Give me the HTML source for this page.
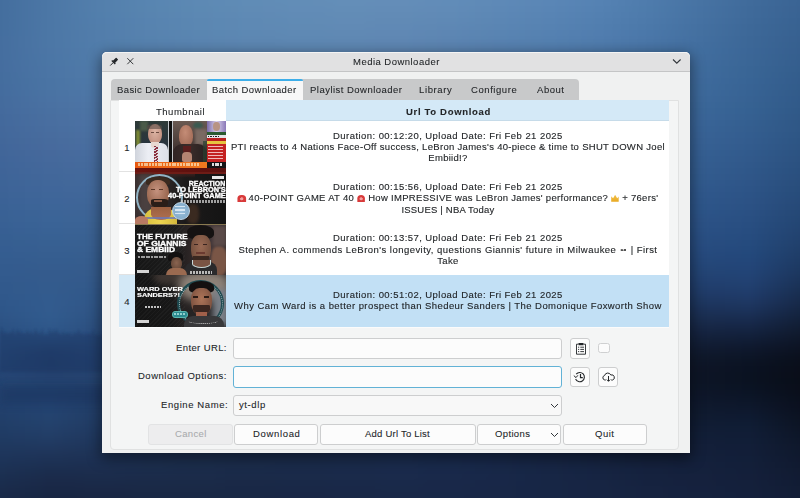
<!DOCTYPE html>
<html><head><meta charset="utf-8">
<style>
*{margin:0;padding:0;box-sizing:border-box}
html,body{width:800px;height:498px;overflow:hidden}
body{position:relative;font-family:"Liberation Sans",sans-serif;font-size:10.2px;color:#232629;
background:#2a4672}
.a{position:absolute}
#bgs{left:0;top:0;width:800px;height:498px;filter:blur(3px)}
#bgs i{position:absolute;left:-15px;width:830px;height:6px;display:block}
#win{left:102px;top:52px;width:588px;height:400.7px;background:#f0f1f1;border-radius:5px 5px 0 0;
 box-shadow:0 4px 14px 2px rgba(0,0,0,.42)}
#title{left:0;top:0;width:588px;height:20px;background:#e1e1e2;border-radius:5px 5px 0 0;border-bottom:1px solid #c4c5c6;box-shadow:inset 0 1px 0 #f4f4f4}
#title .t{left:0;width:588px;top:4px;text-align:center;font-size:10.6px;color:#31363b}
#tabbar{left:9px;top:27px;width:468px;height:21px;background:#c8c9ca;border-radius:4px 4px 0 0}
#tabact{left:105px;top:27px;width:96px;height:22px;background:#f7f7f7;border-top:2px solid #3daee9;border-radius:2px 2px 0 0}
.tab{top:33px;font-size:10.2px;color:#31363b;white-space:nowrap}
#page{left:8.2px;top:48px;width:569.3px;height:349.5px;background:#f4f5f5;border:1px solid #e0e1e1;border-radius:0 0 4px 4px}
#table{left:17px;top:48px;width:550px;height:21px;background:#fff}
#hdr{left:123.5px;top:48px;width:443.5px;height:21px;background:#d4e9f7;border-bottom:1px solid #c6dbe9}
.th{font-weight:bold}
.row{left:33px;width:534px;height:51.4px;background:#fff}
.vh{left:17px;width:16px;height:51.4px;background:#fff;border-bottom:1px solid #e2e2e2;text-align:center;line-height:51px;font-size:0}
.vn{left:17px;width:16px;text-align:center;font-size:8.8px;line-height:8.8px;transform:scaleX(1.08);-webkit-text-stroke:0.1px #232629}
.ln{left:123px;width:444px;text-align:center;line-height:11px;font-size:8.8px;white-space:pre;transform:scaleX(1.08);transform-origin:222.3px 0;color:#1e2124;-webkit-text-stroke:0.12px #1e2124}
.sel{background:#c2e0f5}
.thumb{left:33px;width:91px;height:51.4px;overflow:hidden;background:#222}
.thumb>*{filter:blur(0.3px)}
.lbl{text-align:right;width:120px;left:4px;white-space:nowrap}
.inp{left:131px;width:329px;height:21px;background:#fcfcfc;border:1px solid #cdcecf;border-radius:3px}
.btn{height:21px;background:#fcfcfc;border:1px solid #cdcecf;border-radius:3px;text-align:center;line-height:19px;white-space:nowrap}
.em{display:inline-block;width:7.5px;height:7px;vertical-align:-0.5px;position:relative}
.em.r{background:radial-gradient(circle at 50% 55%,#f4a0a0 0 1.2px,#d83a3a 1.8px);border-radius:3.5px 3.5px 0.5px 0.5px}
.em.y{background:linear-gradient(#f2c14a,#e8a820);clip-path:polygon(0 20%,25% 50%,50% 0,75% 50%,100% 20%,100% 100%,0 100%)}
.em.e{background:radial-gradient(circle at 30% 60%,#555 0 1px,transparent 1.3px),radial-gradient(circle at 70% 60%,#555 0 1px,transparent 1.3px)}

.thumb i{position:absolute;display:block}
.thumb b{position:absolute;display:block;color:#fff;font-weight:bold;line-height:1;white-space:pre;transform-origin:0 0;font-family:"Liberation Sans",sans-serif}
.ui{font-size:8.8px;line-height:8.8px;white-space:pre;transform:scaleX(1.08);transform-origin:0 0;-webkit-text-stroke:0.08px currentColor}
</style></head><body>
<div id="bgs" class="a">
<i style="top:-12px;background:linear-gradient(90deg,#446e9e 15px,#4c77a6 65px,#537fac 115px,#5885b1 165px,#5d8ab4 215px,#608cb6 265px,#638eb8 315px,#648eb8 365px,#648eb8 415px,#628cb8 465px,#5e8ab7 515px,#5a87b6 565px,#5582b3 615px,#4f7cac 665px,#4773a4 715px,#406b9b 765px,#3b6494 815px)"></i>
<i style="top:-6px;background:linear-gradient(90deg,#446e9e 15px,#4c77a6 65px,#537fac 115px,#5885b1 165px,#5d8ab4 215px,#608cb6 265px,#638eb8 315px,#648eb8 365px,#648eb8 415px,#628cb8 465px,#5e8ab7 515px,#5a87b6 565px,#5582b3 615px,#4f7cac 665px,#4773a4 715px,#406b9b 765px,#3b6494 815px)"></i>
<i style="top:0px;background:linear-gradient(90deg,#446e9e 15px,#4c77a6 65px,#537fac 115px,#5885b1 165px,#5d89b4 215px,#608cb6 265px,#628db7 315px,#648eb8 365px,#648db8 415px,#618cb8 465px,#5e89b7 515px,#5a86b6 565px,#5582b3 615px,#4e7bac 665px,#4773a3 715px,#406b9b 765px,#3a6494 815px)"></i>
<i style="top:6px;background:linear-gradient(90deg,#446e9e 15px,#4c77a6 65px,#537fac 115px,#5885b0 165px,#5c89b3 215px,#608bb5 265px,#628cb7 315px,#638db7 365px,#638cb7 415px,#618bb7 465px,#5d88b6 515px,#5985b5 565px,#5481b2 615px,#4d7bab 665px,#4672a3 715px,#3f6a9a 765px,#3a6393 815px)"></i>
<i style="top:12px;background:linear-gradient(90deg,#446e9e 15px,#4c77a6 65px,#527fac 115px,#5884b0 165px,#5c88b3 215px,#5f8ab5 265px,#618bb6 315px,#628cb6 365px,#628bb6 415px,#608ab6 465px,#5c87b5 515px,#5884b4 565px,#5380b1 615px,#4d7aab 665px,#4672a2 715px,#3f6a9a 765px,#396393 815px)"></i>
<i style="top:18px;background:linear-gradient(90deg,#446e9e 15px,#4c77a6 65px,#527eac 115px,#5783b0 165px,#5b87b2 215px,#5e89b4 265px,#608bb5 315px,#628bb6 365px,#618ab5 415px,#5f89b5 465px,#5b86b4 515px,#5783b3 565px,#527fb0 615px,#4c79aa 665px,#4571a2 715px,#3e6999 765px,#386292 815px)"></i>
<i style="top:24px;background:linear-gradient(90deg,#446e9e 15px,#4c77a6 65px,#527eab 115px,#5783af 165px,#5b87b2 215px,#5e89b4 265px,#608ab4 315px,#618ab5 365px,#6089b5 415px,#5e87b4 465px,#5a85b3 515px,#5682b2 565px,#517eaf 615px,#4b78a9 665px,#4470a1 715px,#3d6898 765px,#386291 815px)"></i>
<i style="top:30px;background:linear-gradient(90deg,#446e9f 15px,#4c77a6 65px,#527dab 115px,#5782af 165px,#5a86b1 215px,#5d88b3 265px,#5f89b4 315px,#6089b4 365px,#6088b4 415px,#5d86b3 465px,#5984b2 515px,#5581b1 565px,#517daf 615px,#4a77a9 665px,#4470a0 715px,#3d6898 765px,#376191 815px)"></i>
<i style="top:36px;background:linear-gradient(90deg,#456e9f 15px,#4c77a6 65px,#527dab 115px,#5682ae 165px,#5a85b1 215px,#5d87b2 265px,#5e88b3 315px,#5f88b3 365px,#5f87b3 415px,#5c85b2 465px,#5883b1 515px,#5480b0 565px,#507cae 615px,#4a76a8 665px,#436fa0 715px,#3c6797 765px,#376090 815px)"></i>
<i style="top:42px;background:linear-gradient(90deg,#456e9f 15px,#4c77a6 65px,#517dab 115px,#5681ae 165px,#5984b0 215px,#5c86b1 265px,#5d87b2 315px,#5e87b2 365px,#5e86b2 415px,#5b84b1 465px,#5781b0 515px,#537faf 565px,#4f7bac 615px,#4975a7 665px,#426e9f 715px,#3c6797 765px,#36608f 815px)"></i>
<i style="top:48px;background:linear-gradient(90deg,#456e9f 15px,#4c76a6 65px,#517caa 115px,#5580ad 165px,#5983af 215px,#5b85b1 265px,#5d86b1 315px,#5d86b2 365px,#5d85b1 415px,#5a83b0 465px,#5680af 515px,#527dae 565px,#4e7aab 615px,#4875a6 665px,#416e9f 715px,#3b6697 765px,#365f8f 815px)"></i>
<i style="top:54px;background:linear-gradient(90deg,#456e9f 15px,#4b76a6 65px,#517caa 115px,#557fad 165px,#5882af 215px,#5a84b0 265px,#5c85b1 315px,#5c85b1 365px,#5b84b0 415px,#5982af 465px,#557fae 515px,#517cad 565px,#4d79aa 615px,#4774a5 665px,#416d9e 715px,#3b6696 765px,#355f8e 815px)"></i>
<i style="top:60px;background:linear-gradient(90deg,#456d9f 15px,#4b76a5 65px,#507ba9 115px,#547fac 165px,#5781ae 215px,#5a83af 265px,#5b83b0 315px,#5b83b0 365px,#5a82af 415px,#5880ae 465px,#547dad 515px,#507bac 565px,#4c77a9 615px,#4673a4 665px,#406c9e 715px,#3a6696 765px,#355e8e 815px)"></i>
<i style="top:66px;background:linear-gradient(90deg,#456d9f 15px,#4b75a5 65px,#507aa9 115px,#547eab 165px,#5780ad 215px,#5982ae 265px,#5a82af 315px,#5a82af 365px,#5981ae 415px,#577fad 465px,#537cac 515px,#4f79aa 565px,#4b76a8 615px,#4572a4 665px,#3f6c9d 715px,#396595 765px,#345e8d 815px)"></i>
<i style="top:72px;background:linear-gradient(90deg,#446d9e 15px,#4b75a5 65px,#507aa8 115px,#537dab 165px,#567fac 215px,#5881ae 265px,#5981ae 315px,#5981ae 365px,#5880ae 415px,#557eac 465px,#527bab 515px,#4e78a9 565px,#4a75a7 615px,#4471a3 665px,#3f6b9d 715px,#396595 765px,#335d8c 815px)"></i>
<i style="top:78px;background:linear-gradient(90deg,#446d9e 15px,#4a74a4 65px,#4f79a8 115px,#537caa 165px,#557eac 215px,#577fad 265px,#5880ad 315px,#5880ad 365px,#577fad 415px,#547cab 465px,#5179aa 515px,#4d76a8 565px,#4974a6 615px,#4470a2 665px,#3e6a9c 715px,#386495 765px,#335c8c 815px)"></i>
<i style="top:84px;background:linear-gradient(90deg,#446c9e 15px,#4a74a4 65px,#4f78a7 115px,#527ba9 165px,#557dab 215px,#567eac 265px,#577fac 315px,#577eac 365px,#567dac 415px,#537baa 465px,#5078a8 515px,#4c75a6 565px,#4772a4 615px,#436fa1 665px,#3d6a9b 715px,#386394 765px,#325c8b 815px)"></i>
<i style="top:90px;background:linear-gradient(90deg,#446c9e 15px,#4a73a3 65px,#4e77a7 115px,#527aa9 165px,#547caa 215px,#557dab 265px,#567dab 315px,#567dab 365px,#557cab 415px,#527aa9 465px,#4e76a7 515px,#4a74a5 565px,#4671a3 615px,#426da0 665px,#3d699b 715px,#376394 765px,#325b8a 815px)"></i>
<i style="top:96px;background:linear-gradient(90deg,#446b9d 15px,#4a72a3 65px,#4e76a6 115px,#5179a8 165px,#537ba9 215px,#547caa 265px,#557caa 315px,#557caa 365px,#537ba9 415px,#5178a8 465px,#4d75a6 515px,#4972a4 565px,#456fa2 615px,#416c9f 665px,#3c689a 715px,#376293 765px,#315a8a 815px)"></i>
<i style="top:102px;background:linear-gradient(90deg,#446b9d 15px,#4a71a2 65px,#4e75a5 115px,#5078a7 165px,#527aa8 215px,#537ba9 265px,#547ba9 315px,#547ba9 365px,#5279a8 415px,#4f77a7 465px,#4c73a4 515px,#4870a2 565px,#446ea1 615px,#406b9e 665px,#3b6799 715px,#366292 765px,#315a89 815px)"></i>
<i style="top:108px;background:linear-gradient(90deg,#446a9d 15px,#4970a1 65px,#4d74a4 115px,#4f77a6 165px,#5179a7 215px,#5279a8 265px,#537aa8 315px,#5279a8 365px,#5178a7 415px,#4e75a5 465px,#4b72a3 515px,#476fa1 565px,#436d9f 615px,#3f6a9d 665px,#3a6698 715px,#356192 765px,#305988 815px)"></i>
<i style="top:114px;background:linear-gradient(90deg,#43699c 15px,#496fa0 65px,#4d73a4 115px,#4f76a5 165px,#5077a6 215px,#5178a7 265px,#5278a7 315px,#5178a7 365px,#4f76a6 415px,#4d74a4 465px,#4970a2 515px,#456d9f 565px,#426b9e 615px,#3e699c 665px,#3a6598 715px,#356091 765px,#305887 815px)"></i>
<i style="top:120px;background:linear-gradient(90deg,#43699c 15px,#496ea0 65px,#4c72a3 115px,#4e75a4 165px,#4f76a5 215px,#5077a6 265px,#5177a6 315px,#5076a6 365px,#4e75a5 415px,#4b72a3 465px,#486fa0 515px,#446c9e 565px,#416a9c 615px,#3d689b 665px,#396497 715px,#345f90 765px,#2f5786 815px)"></i>
<i style="top:126px;background:linear-gradient(90deg,#43689b 15px,#486d9f 65px,#4b71a2 115px,#4d74a4 165px,#4f75a4 215px,#4f75a5 265px,#4f75a5 315px,#4f75a5 365px,#4d74a4 415px,#4a71a2 465px,#476d9f 515px,#436a9c 565px,#40689b 615px,#3c669a 665px,#386396 715px,#345e8f 765px,#2f5786 815px)"></i>
<i style="top:132px;background:linear-gradient(90deg,#42689b 15px,#486c9e 65px,#4b70a1 115px,#4c73a3 165px,#4e74a3 215px,#4e74a4 265px,#4e74a4 315px,#4d74a4 365px,#4c72a3 415px,#496fa0 465px,#456c9d 515px,#42699b 565px,#3f679a 615px,#3b6598 665px,#386295 715px,#335d8f 765px,#2e5685 815px)"></i>
<i style="top:138px;background:linear-gradient(90deg,#42679a 15px,#476b9d 65px,#4a6fa0 115px,#4b71a2 165px,#4d72a2 215px,#4d73a2 265px,#4d73a3 315px,#4c72a3 365px,#4a71a2 415px,#476e9f 465px,#446a9c 515px,#406799 565px,#3d6598 615px,#3a6497 665px,#376194 715px,#335c8e 765px,#2d5584 815px)"></i>
<i style="top:144px;background:linear-gradient(90deg,#41669a 15px,#476a9d 65px,#496ea0 115px,#4b70a1 165px,#4c71a1 215px,#4c71a1 265px,#4c71a1 315px,#4b71a1 365px,#496fa0 415px,#466c9e 465px,#43699a 515px,#3f6597 565px,#3c6497 615px,#396396 665px,#366093 715px,#325b8d 765px,#2d5483 815px)"></i>
<i style="top:150px;background:linear-gradient(90deg,#416699 15px,#46699c 65px,#486d9f 115px,#4a6fa0 165px,#4a70a0 215px,#4b70a0 265px,#4b70a0 315px,#4a6fa0 365px,#486e9f 415px,#456b9c 465px,#416799 515px,#3e6496 565px,#3b6295 615px,#386195 665px,#355f92 715px,#315a8c 765px,#2c5382 815px)"></i>
<i style="top:156px;background:linear-gradient(90deg,#406599 15px,#45699c 65px,#476c9e 115px,#496e9f 165px,#496e9f 215px,#4a6e9f 265px,#496e9f 315px,#486e9f 365px,#466c9e 415px,#43699b 465px,#406597 515px,#3d6294 565px,#3a6193 615px,#376093 665px,#345e91 715px,#31598b 765px,#2c5281 815px)"></i>
<i style="top:162px;background:linear-gradient(90deg,#3f6599 15px,#44689b 65px,#466b9d 115px,#486d9e 165px,#486d9d 215px,#496d9d 265px,#486d9d 315px,#476c9e 365px,#456b9d 415px,#42689a 465px,#3f6496 515px,#3b6192 565px,#395f92 615px,#365f92 665px,#345d90 715px,#30588a 765px,#2b5180 815px)"></i>
<i style="top:168px;background:linear-gradient(90deg,#3f6498 15px,#43689b 65px,#456a9c 115px,#476c9d 165px,#476c9c 215px,#476c9c 265px,#476b9c 315px,#466b9c 365px,#44699b 415px,#416698 465px,#3d6294 515px,#3a5f91 565px,#385e90 615px,#355d91 665px,#335c8f 715px,#2f5789 765px,#2a507f 815px)"></i>
<i style="top:174px;background:linear-gradient(90deg,#3e6498 15px,#42679a 65px,#446a9c 115px,#466b9c 165px,#466a9b 215px,#466a9a 265px,#456a9b 315px,#44699b 365px,#42689a 415px,#3f6597 465px,#3c6192 515px,#395d8f 565px,#365c8e 615px,#345c8f 665px,#325b8e 715px,#2f5688 765px,#2a4f7e 815px)"></i>
<i style="top:180px;background:linear-gradient(90deg,#3d6497 15px,#41679a 65px,#43699b 115px,#44699a 165px,#45699a 215px,#456999 265px,#446899 315px,#43689a 365px,#416699 415px,#3e6395 465px,#3b5f91 515px,#385c8d 565px,#355b8d 615px,#335b8e 665px,#315a8d 715px,#2e5588 765px,#294e7c 815px)"></i>
<i style="top:186px;background:linear-gradient(90deg,#3d6397 15px,#40669a 65px,#42689a 115px,#436899 165px,#446898 215px,#446797 265px,#436798 315px,#426698 365px,#406597 415px,#3d6294 465px,#3a5d8f 515px,#365a8b 565px,#34598b 615px,#32598c 665px,#30588c 715px,#2d5487 765px,#284d7b 815px)"></i>
<i style="top:192px;background:linear-gradient(90deg,#3c6396 15px,#3f6699 65px,#416799 115px,#426798 165px,#436697 215px,#426696 265px,#426596 315px,#406597 365px,#3e6396 415px,#3b6092 465px,#385c8d 515px,#35598a 565px,#335789 615px,#31588b 665px,#2f578b 715px,#2c5386 765px,#274c7a 815px)"></i>
<i style="top:198px;background:linear-gradient(90deg,#3b6296 15px,#3e6599 65px,#406698 115px,#416697 165px,#416595 215px,#416494 265px,#406495 315px,#3f6395 365px,#3d6295 415px,#3a5f91 465px,#375a8c 515px,#345788 565px,#325687 615px,#305689 665px,#2e568a 715px,#2c5285 765px,#274a79 815px)"></i>
<i style="top:204px;background:linear-gradient(90deg,#3a6295 15px,#3d6598 65px,#3f6597 115px,#406596 165px,#406494 215px,#406393 265px,#3f6293 315px,#3e6294 365px,#3c6093 415px,#395d8f 465px,#36598a 515px,#335586 565px,#315485 615px,#2f5587 665px,#2d5589 715px,#2b5184 765px,#264977 815px)"></i>
<i style="top:210px;background:linear-gradient(90deg,#396195 15px,#3c6497 65px,#3e6496 115px,#3f6495 165px,#3f6292 215px,#3e6191 265px,#3e6191 315px,#3c6092 365px,#3a5f92 415px,#385b8d 465px,#345788 515px,#325384 565px,#2f5283 615px,#2e5385 665px,#2c5488 715px,#2a5083 765px,#254876 815px)"></i>
<i style="top:216px;background:linear-gradient(90deg,#396194 15px,#3b6497 65px,#3d6495 115px,#3e6293 165px,#3e6191 215px,#3d5f8f 265px,#3c5f90 315px,#3b5f91 365px,#395d90 415px,#365a8c 465px,#335586 515px,#305282 565px,#2e5081 615px,#2d5183 665px,#2c5286 715px,#294f82 765px,#244774 815px)"></i>
<i style="top:222px;background:linear-gradient(90deg,#386094 15px,#3a6396 65px,#3c6394 115px,#3d6192 165px,#3c5f8f 215px,#3c5e8e 265px,#3b5d8e 315px,#3a5d8f 365px,#385c8f 415px,#35588a 465px,#325484 515px,#2f5080 565px,#2d4f7f 615px,#2c5081 665px,#2b5185 715px,#284e81 765px,#234573 815px)"></i>
<i style="top:228px;background:linear-gradient(90deg,#375f93 15px,#396295 65px,#3b6293 115px,#3c6091 165px,#3b5e8e 215px,#3a5c8c 265px,#3a5c8c 315px,#385c8d 365px,#365a8d 415px,#345788 465px,#315282 515px,#2e4e7d 565px,#2c4d7c 615px,#2b4e7f 665px,#2a5084 715px,#274d80 765px,#234471 815px)"></i>
<i style="top:234px;background:linear-gradient(90deg,#365f92 15px,#386193 65px,#3a6192 115px,#3b5f8f 165px,#3a5c8c 215px,#395b8a 265px,#385a8a 315px,#375a8c 365px,#35598b 415px,#325586 465px,#2f5080 515px,#2d4d7b 565px,#2b4b7a 615px,#2a4c7d 665px,#294e82 715px,#264c7f 765px,#22426f 815px)"></i>
<i style="top:240px;background:linear-gradient(90deg,#365e91 15px,#376092 65px,#396091 115px,#395e8e 165px,#395b8a 215px,#385988 265px,#375888 315px,#36588a 365px,#34578a 415px,#315385 465px,#2e4f7e 515px,#2b4b79 565px,#2a4977 615px,#294a7a 665px,#284d80 715px,#254b7e 765px,#21416d 815px)"></i>
<i style="top:246px;background:linear-gradient(90deg,#355d91 15px,#375f91 65px,#385f90 115px,#385c8d 165px,#385989 215px,#375786 265px,#365787 315px,#355788 365px,#335688 415px,#305283 465px,#2d4d7c 515px,#2a4977 565px,#284775 615px,#274878 665px,#274b7f 715px,#244a7d 765px,#203f6a 815px)"></i>
<i style="top:252px;background:linear-gradient(90deg,#345d90 15px,#365e90 65px,#375e8f 115px,#375b8b 165px,#365887 215px,#355684 265px,#345585 315px,#335586 365px,#315486 415px,#2f5081 465px,#2c4b7a 515px,#294774 565px,#274572 615px,#264675 665px,#26497c 715px,#23487b 765px,#1f3d68 815px)"></i>
<i style="top:258px;background:linear-gradient(90deg,#345c8f 15px,#355d8f 65px,#365d8e 115px,#365a8a 165px,#355685 215px,#345483 265px,#335383 315px,#325384 365px,#305284 415px,#2e4f7f 465px,#2b4a78 515px,#284572 565px,#26436f 615px,#254472 665px,#25487a 715px,#23477a 765px,#1e3b65 815px)"></i>
<i style="top:264px;background:linear-gradient(90deg,#335b8e 15px,#355c8e 65px,#365c8d 115px,#355888 165px,#345583 215px,#335281 265px,#325281 315px,#315282 365px,#2f5182 415px,#2d4d7d 465px,#294876 515px,#27446f 565px,#25416d 615px,#24426f 665px,#244677 715px,#234578 765px,#1d3962 815px)"></i>
<i style="top:270px;background:linear-gradient(90deg,#335b8e 15px,#345b8d 65px,#355b8c 115px,#345787 165px,#335382 215px,#32517f 265px,#31507f 315px,#305080 365px,#2e4f80 415px,#2b4b7b 465px,#284674 515px,#26426d 565px,#243f6a 615px,#23406c 665px,#234474 715px,#224476 765px,#1c375f 815px)"></i>
<i style="top:276px;background:linear-gradient(90deg,#325a8d 15px,#345b8d 65px,#345a8b 115px,#335685 165px,#325280 215px,#304f7c 265px,#2f4e7d 315px,#2e4f7e 365px,#2d4d7e 415px,#2a4a79 465px,#274571 515px,#24406b 565px,#223d67 615px,#223d68 665px,#224171 715px,#224273 765px,#1b345b 815px)"></i>
<i style="top:282px;background:linear-gradient(90deg,#31598c 15px,#335b8d 65px,#33598a 115px,#325484 165px,#30507e 215px,#2f4d7a 265px,#2e4d7a 315px,#2d4d7c 365px,#2c4c7c 415px,#294877 465px,#26436f 515px,#233e68 565px,#213b64 615px,#213b64 665px,#213f6d 715px,#214070 765px,#1a3257 815px)"></i>
<i style="top:288px;background:linear-gradient(90deg,#31598c 15px,#335b8d 65px,#325889 115px,#315382 165px,#2f4f7c 215px,#2e4c78 265px,#2d4b78 315px,#2c4b7a 365px,#2b4a79 415px,#284775 465px,#25416d 515px,#223c66 565px,#203961 615px,#1f3860 665px,#203c69 715px,#203d6c 765px,#192f52 815px)"></i>
<i style="top:294px;background:linear-gradient(90deg,#30588b 15px,#325b8e 65px,#315788 115px,#305280 165px,#2e4d7a 215px,#2d4a76 265px,#2c4976 315px,#2b4a78 365px,#2a4977 415px,#274573 465px,#24406b 515px,#213b63 565px,#1f375e 615px,#1e365d 665px,#1f3964 715px,#1f3a68 765px,#182c4e 815px)"></i>
<i style="top:300px;background:linear-gradient(90deg,#2f578a 15px,#325b8e 65px,#315687 115px,#2f507f 165px,#2d4c78 215px,#2b4874 265px,#2b4874 315px,#2a4876 365px,#294775 415px,#264370 465px,#233e69 515px,#203961 565px,#1e355b 615px,#1d3358 665px,#1d365e 715px,#1e3762 765px,#172949 815px)"></i>
<i style="top:306px;background:linear-gradient(90deg,#2e5689 15px,#325b8e 65px,#305485 115px,#2e4f7d 165px,#2c4a76 215px,#2a4772 265px,#2a4672 315px,#294774 365px,#284573 415px,#25426e 465px,#223d67 515px,#1f375f 565px,#1d3358 615px,#1c3154 665px,#1c3259 715px,#1c335c 765px,#152644 815px)"></i>
<i style="top:312px;background:linear-gradient(90deg,#2e5587 15px,#315b8e 65px,#2e5383 115px,#2d4d7b 165px,#2b4974 215px,#294570 265px,#294570 315px,#284572 365px,#274471 415px,#24406c 465px,#213b65 515px,#1e365c 565px,#1c3155 615px,#1a2e50 665px,#1a2f52 715px,#1a2f54 765px,#14233e 815px)"></i>
<i style="top:318px;background:linear-gradient(90deg,#2d5385 15px,#305a8d 65px,#2d5181 115px,#2c4c79 165px,#2a4772 215px,#28446e 265px,#28436e 315px,#274370 365px,#26426f 415px,#233f6b 465px,#203a63 515px,#1d345a 565px,#1b2f52 615px,#192c4c 665px,#192b4c 715px,#182a4d 765px,#122039 815px)"></i>
<i style="top:324px;background:linear-gradient(90deg,#2b5183 15px,#2f588b 65px,#2c4f7f 115px,#2b4a77 165px,#294671 215px,#27426c 265px,#27426c 315px,#26426e 365px,#25416d 415px,#233e69 465px,#203861 515px,#1c3358 565px,#1a2e50 615px,#182948 665px,#172746 715px,#162645 765px,#111d33 815px)"></i>
<i style="top:330px;background:linear-gradient(90deg,#2a5081 15px,#2d5587 65px,#2b4d7d 115px,#2a4976 165px,#28446f 215px,#26406a 265px,#26406a 315px,#25416c 365px,#24406b 415px,#223c67 465px,#1f375f 515px,#1c3156 565px,#192c4d 615px,#172745 665px,#15233f 715px,#13223e 765px,#101a2e 815px)"></i>
<i style="top:336px;background:linear-gradient(90deg,#294e7e 15px,#2a4f80 65px,#2a4b7a 115px,#294874 165px,#27436d 215px,#253f68 265px,#253f68 315px,#243f6a 365px,#233e69 415px,#213b65 465px,#1e365d 515px,#1b3054 565px,#182b4b 615px,#162541 665px,#132039 715px,#111e37 765px,#0e1729 815px)"></i>
<i style="top:342px;background:linear-gradient(90deg,#284c7c 15px,#274876 65px,#284977 115px,#284672 165px,#26416b 215px,#243e66 265px,#243d67 315px,#243e68 365px,#233d67 415px,#203a63 465px,#1d355b 515px,#1a2e52 565px,#182949 615px,#15233e 665px,#121d34 715px,#0f1a30 765px,#0d1425 815px)"></i>
<i style="top:348px;background:linear-gradient(90deg,#274a7a 15px,#24426f 65px,#274775 115px,#274570 165px,#254069 215px,#233c64 265px,#233c65 315px,#233d66 365px,#223c66 415px,#203861 465px,#1d335a 515px,#192d50 565px,#172847 615px,#14213b 665px,#101a2f 715px,#0e172b 765px,#0c1221 815px)"></i>
<i style="top:354px;background:linear-gradient(90deg,#264877 15px,#233f6c 65px,#264573 115px,#26436e 165px,#243f68 215px,#233b63 265px,#223b63 315px,#223b65 365px,#213a64 415px,#1f3760 465px,#1c3258 515px,#192c4f 565px,#162745 615px,#132038 665px,#0f182a 715px,#0c1527 765px,#0b101d 815px)"></i>
<i style="top:360px;background:linear-gradient(90deg,#254776 15px,#223f6b 65px,#254471 115px,#25426c 165px,#243e66 215px,#223a61 265px,#223a61 315px,#213a63 365px,#203962 415px,#1e365e 465px,#1c3157 515px,#182b4d 565px,#162643 615px,#131f36 665px,#0e1628 715px,#0b1323 765px,#0a0f1b 815px)"></i>
<i style="top:366px;background:linear-gradient(90deg,#244574 15px,#223f6c 65px,#24436f 115px,#25416b 165px,#233c64 215px,#213960 265px,#213960 315px,#213961 365px,#203861 415px,#1e355d 465px,#1b3055 515px,#182b4c 565px,#152542 615px,#121e35 665px,#0e1526 715px,#0a1222 765px,#0a0e1a 815px)"></i>
<i style="top:372px;background:linear-gradient(90deg,#244473 15px,#223f6c 65px,#24416d 115px,#243f69 165px,#223b63 215px,#21385e 265px,#20375e 315px,#203860 365px,#1f375f 415px,#1d345b 465px,#1b2f54 515px,#182a4b 565px,#152441 615px,#121d34 665px,#0d1526 715px,#0a1221 765px,#0a0e19 815px)"></i>
<i style="top:378px;background:linear-gradient(90deg,#234471 15px,#22406d 65px,#23416c 115px,#233e67 165px,#223a61 215px,#20375d 265px,#20365d 315px,#20375e 365px,#1f365d 415px,#1d335a 465px,#1a2f53 515px,#17294a 565px,#152340 615px,#121c33 665px,#0d1526 715px,#0a1221 765px,#090e19 815px)"></i>
<i style="top:384px;background:linear-gradient(90deg,#234370 15px,#22416e 65px,#23406b 115px,#233d66 165px,#21395f 215px,#20365b 265px,#1f355b 315px,#1f365c 365px,#1e355c 415px,#1c3258 465px,#1a2e52 515px,#172949 565px,#15233f 615px,#111c33 665px,#0d1627 715px,#0a1323 765px,#0a0e1a 815px)"></i>
<i style="top:390px;background:linear-gradient(90deg,#23426f 15px,#22426f 65px,#223f6a 115px,#223c64 165px,#21385e 215px,#1f355a 265px,#1f355a 315px,#1f355b 365px,#1e345b 415px,#1c3157 465px,#1a2d51 515px,#172848 565px,#14233e 615px,#111c33 665px,#0e1629 715px,#0b1425 765px,#0a0f1b 815px)"></i>
<i style="top:396px;background:linear-gradient(90deg,#22426e 15px,#234270 65px,#223e69 115px,#213b62 165px,#20375c 215px,#1f3459 265px,#1e3459 315px,#1e345a 365px,#1d3359 415px,#1c3156 465px,#192d50 515px,#172848 565px,#14223e 615px,#111c33 665px,#0e172b 715px,#0c1628 765px,#0a101d 815px)"></i>
<i style="top:402px;background:linear-gradient(90deg,#22416d 15px,#234370 65px,#223e68 115px,#213a61 165px,#20365b 215px,#1e3357 265px,#1e3357 315px,#1e3358 365px,#1d3258 415px,#1b3055 465px,#192c4f 515px,#172747 565px,#14223e 615px,#111c33 665px,#0f192d 715px,#0d172b 765px,#0b101f 815px)"></i>
<i style="top:408px;background:linear-gradient(90deg,#22406c 15px,#234370 65px,#223d66 115px,#20395f 165px,#1f355a 215px,#1e3356 265px,#1d3256 315px,#1d3257 365px,#1c3157 415px,#1b2f54 465px,#192b4e 515px,#172747 565px,#14223e 615px,#121d34 665px,#0f1a2f 715px,#0e192e 765px,#0b1120 815px)"></i>
<i style="top:414px;background:linear-gradient(90deg,#213f6a 15px,#24436f 65px,#213c65 115px,#20385d 165px,#1f3458 215px,#1d3255 265px,#1d3155 315px,#1d3156 365px,#1c3055 415px,#1b2e53 465px,#192b4d 515px,#172746 565px,#14223e 615px,#121d35 665px,#101b31 715px,#0e1a31 765px,#0c1322 815px)"></i>
<i style="top:420px;background:linear-gradient(90deg,#213e68 15px,#23426d 65px,#213b63 115px,#1f365c 165px,#1e3357 215px,#1d3154 265px,#1d3053 315px,#1c3054 365px,#1c3054 415px,#1a2e52 465px,#192a4d 515px,#172746 565px,#15223e 615px,#121e36 665px,#101c33 715px,#0f1c33 765px,#0c1424 815px)"></i>
<i style="top:426px;background:linear-gradient(90deg,#203d66 15px,#23406a 65px,#203961 115px,#1f355a 165px,#1e3255 215px,#1d3052 265px,#1c2f52 315px,#1c2f53 365px,#1b2f53 415px,#1a2d51 465px,#182a4c 515px,#172646 565px,#15223e 615px,#121e37 665px,#111d35 715px,#101d35 765px,#0d1526 815px)"></i>
<i style="top:432px;background:linear-gradient(90deg,#203b64 15px,#223e67 65px,#20385e 115px,#1e3458 165px,#1d3154 215px,#1c2f51 265px,#1c2f51 315px,#1c2f52 365px,#1b2e52 415px,#1a2c50 465px,#182a4b 515px,#172646 565px,#15233f 615px,#131f38 665px,#111e36 715px,#111d36 765px,#0d1628 815px)"></i>
<i style="top:438px;background:linear-gradient(90deg,#1f3a61 15px,#213b63 65px,#1f365c 115px,#1e3356 165px,#1d3152 215px,#1c2f50 265px,#1c2e50 315px,#1b2e51 365px,#1b2e51 415px,#1a2c4f 465px,#18294b 515px,#172646 565px,#15233f 615px,#131f39 665px,#121e38 715px,#111e37 765px,#0e172a 815px)"></i>
<i style="top:444px;background:linear-gradient(90deg,#1f385e 15px,#20385f 65px,#1f3559 115px,#1d3254 165px,#1d3051 215px,#1c2e4f 265px,#1b2d4f 315px,#1b2d50 365px,#1b2d50 415px,#1a2b4e 465px,#18294a 515px,#172645 565px,#152340 615px,#14203a 665px,#131f39 715px,#121e38 765px,#0f182c 815px)"></i>
<i style="top:450px;background:linear-gradient(90deg,#1e365c 15px,#1f355a 65px,#1e3356 115px,#1d3052 165px,#1c2f4f 215px,#1b2d4d 265px,#1b2c4d 315px,#1b2c4e 365px,#1a2c4f 415px,#192b4d 465px,#18294a 515px,#172645 565px,#152340 615px,#14203b 665px,#131f3a 715px,#121e38 765px,#0f192d 815px)"></i>
<i style="top:456px;background:linear-gradient(90deg,#1d3459 15px,#1d3256 65px,#1d3154 115px,#1c2f50 165px,#1c2e4e 215px,#1b2c4c 265px,#1b2c4c 315px,#1b2c4d 365px,#1a2c4e 415px,#192a4c 465px,#182849 515px,#172645 565px,#162441 615px,#14213c 665px,#13203b 715px,#121f39 765px,#10192f 815px)"></i>
<i style="top:462px;background:linear-gradient(90deg,#1c3256 15px,#1c3052 65px,#1c2f51 115px,#1c2e4e 165px,#1b2d4c 215px,#1b2c4b 265px,#1a2b4b 315px,#1a2b4c 365px,#1a2b4d 415px,#192a4c 465px,#182849 515px,#172645 565px,#162441 615px,#15213d 665px,#14203c 715px,#131f39 765px,#101a30 815px)"></i>
<i style="top:468px;background:linear-gradient(90deg,#1c3153 15px,#1b2d4e 65px,#1c2d4e 115px,#1b2d4c 165px,#1b2c4b 215px,#1a2b4a 265px,#1a2a4a 315px,#1a2a4b 365px,#1a2a4c 415px,#19294b 465px,#182848 515px,#172645 565px,#162442 615px,#15223e 665px,#14213c 715px,#131f3a 765px,#111b31 815px)"></i>
<i style="top:474px;background:linear-gradient(90deg,#1b2f50 15px,#1b2b4b 65px,#1b2c4b 115px,#1b2b4a 165px,#1b2b49 215px,#1a2a48 265px,#1a2a49 315px,#1a2a4a 365px,#1a2a4b 415px,#19294a 465px,#182748 515px,#172645 565px,#162442 615px,#15223e 665px,#15213d 715px,#141f3a 765px,#111b33 815px)"></i>
<i style="top:480px;background:linear-gradient(90deg,#1a2d4e 15px,#1a2948 65px,#1a2a49 115px,#1a2a48 165px,#1a2a48 215px,#1a2947 265px,#192948 315px,#192949 365px,#19294a 415px,#192849 465px,#182748 515px,#172645 565px,#172543 615px,#15223f 665px,#15213d 715px,#14203b 765px,#111c34 815px)"></i>
<i style="top:486px;background:linear-gradient(90deg,#1a2b4b 15px,#192846 65px,#1a2846 115px,#1a2946 165px,#1a2946 215px,#192846 265px,#192847 315px,#192848 365px,#192949 415px,#192849 465px,#182747 515px,#172645 565px,#172543 615px,#162340 665px,#15213e 715px,#14203b 765px,#121d35 815px)"></i>
<i style="top:492px;background:linear-gradient(90deg,#192a49 15px,#182643 65px,#192744 115px,#192845 165px,#192845 215px,#192845 265px,#192746 315px,#192847 365px,#192848 415px,#182848 465px,#182747 515px,#172645 565px,#172543 615px,#162340 665px,#15223e 715px,#14203c 765px,#121d36 815px)"></i>
<i style="top:498px;background:linear-gradient(90deg,#192948 15px,#182642 65px,#192643 115px,#192744 165px,#192744 215px,#192744 265px,#192745 315px,#192747 365px,#192848 415px,#182748 465px,#182646 515px,#172645 565px,#172543 615px,#162340 665px,#15223f 715px,#15203c 765px,#121d36 815px)"></i>
<i style="top:504px;background:linear-gradient(90deg,#192948 15px,#182642 65px,#192643 115px,#192744 165px,#192744 215px,#192744 265px,#192745 315px,#192747 365px,#192848 415px,#182748 465px,#182646 515px,#172645 565px,#172543 615px,#162340 665px,#15223f 715px,#15203c 765px,#121d36 815px)"></i>
</div>
<svg class="a" style="left:0;top:300px" width="110" height="140" viewBox="0 300 110 140">
<defs><filter id="bl" x="-20%" y="-50%" width="140%" height="200%"><feGaussianBlur stdDeviation="1"/></filter>
<filter id="bl2" x="-20%" y="-50%" width="140%" height="200%"><feGaussianBlur stdDeviation="4"/></filter></defs>
<polygon points="0.0,334.1 1.9,327.4 3.7,334.3 5.7,331.1 7.6,334.7 9.8,331.7 11.4,333.4 13.6,328.8 14.9,335.7 17.3,329.0 19.3,333.8 20.6,329.7 21.8,333.9 23.4,332.3 25.2,334.6 27.5,329.9 29.5,334.8 31.6,330.3 33.1,336.1 35.6,328.4 37.7,334.5 39.2,331.3 40.5,335.7 42.2,328.5 43.9,336.2 46.2,332.8 47.7,336.2 49.5,328.0 51.2,334.2 53.3,329.1 54.8,334.3 56.4,328.2 58.6,334.4 60.1,332.6 61.4,336.2 62.9,330.4 64.6,334.7 66.8,332.6 68.8,334.6 70.6,332.3 72.1,336.8 74.4,331.9 76.7,335.0 78.4,329.2 80.5,334.8 83.0,332.5 84.5,336.6 86.1,332.1 87.4,334.9 89.4,332.5 91.4,335.7 93.1,329.0 95.0,336.3 97.3,332.9 98.7,337.2 101.0,332.7 102.4,336.8 104.8,333.0 104,372 0,372" fill="#1a3462" opacity=".42" filter="url(#bl)"/>
<rect x="0" y="372" width="110" height="12" fill="#3a5a8a" opacity=".12" filter="url(#bl2)"/>
<rect x="0" y="386" width="110" height="18" fill="#142a54" opacity=".28" filter="url(#bl2)"/>
</svg>
<div id="win" class="a">
  <div id="title" class="a"><svg class="a" style="left:5px;top:3px" width="34" height="15" viewBox="0 0 34 15">
<g transform="translate(7.6,6.2) rotate(45) scale(0.82)"><rect x="-1.8" y="-4.5" width="3.6" height="6" rx="0.8" fill="#232629"/><rect x="-3" y="1" width="6" height="1.6" fill="#232629"/><line x1="0" y1="2.5" x2="0" y2="7.5" stroke="#232629" stroke-width="1.1"/></g>
<path d="M20.3 3.2 L26.3 9.2 M26.3 3.2 L20.3 9.2" stroke="#232629" stroke-width="0.9" fill="none"/>
</svg>
<svg class="a" style="left:570px;top:6px" width="10" height="7" viewBox="0 0 10 7"><path d="M1 1.5 L4.8 5.2 L8.6 1.5" stroke="#31363b" stroke-width="1.1" fill="none"/></svg></div>
  <div id="tabbar" class="a"></div>
  <div id="page" class="a"></div>
  <div id="tabact" class="a"></div>
  <div id="table" class="a"></div>
  
  <div id="hdr" class="a"></div>
  

  <div class="a row" style="top:69px"></div>
  <div class="a row" style="top:120.4px"></div>
  <div class="a row" style="top:171.8px"></div>
  <div class="a row sel" style="top:223.2px"></div>
  <div class="a vh" style="top:69px">1</div>
  <div class="a vh" style="top:120.4px">2</div>
  <div class="a vh" style="top:171.8px">3</div>
  <div class="a vh" style="top:223.2px;border-bottom:none;background:#d3e8f6">4</div>
  <div class="a" style="left:17px;top:274.6px;width:550px;height:1.6px;background:#fbfbfb"></div>
<div class="a vn" style="top:92.05px">1</div>
<div class="a vn" style="top:143.45px">2</div>
<div class="a vn" style="top:194.85px">3</div>
<div class="a vn" style="top:246.25px">4</div>
<div class="a ln" style="top:78.6px;letter-spacing:0.408px;padding-left:1.8px">Duration: 00:12:20, Upload Date: Fri Feb 21 2025</div>
<div class="a ln" style="top:89.9px;letter-spacing:0.283px;padding-left:1.8px">PTI reacts to 4 Nations Face-Off success, LeBron James's 40-piece &amp; time to SHUT DOWN Joel</div>
<div class="a ln" style="top:101.2px;letter-spacing:0.269px;padding-left:1.8px">Embiid!?</div>
<div class="a ln" style="top:130.0px;letter-spacing:0.408px;padding-left:1.8px">Duration: 00:15:56, Upload Date: Fri Feb 21 2025</div>
<div class="a ln" style="top:141.3px;letter-spacing:0.283px;padding-left:1.8px"><span class="em r"></span> 40-POINT GAME AT 40 <span class="em r"></span> How IMPRESSIVE was LeBron James' performance? <span class="em y"></span> + 76ers'</div>
<div class="a ln" style="top:152.6px;letter-spacing:0.188px;padding-left:1.8px">ISSUES | NBA Today</div>
<div class="a ln" style="top:181.4px;letter-spacing:0.408px;padding-left:1.8px">Duration: 00:13:57, Upload Date: Fri Feb 21 2025</div>
<div class="a ln" style="top:192.7px;letter-spacing:0.427px;padding-left:1.8px">Stephen A. commends LeBron's longevity, questions Giannis' future in Milwaukee <span class="em e"></span> | First</div>
<div class="a ln" style="top:204.0px;letter-spacing:0.328px;padding-left:1.8px">Take</div>
<div class="a ln" style="top:238.1px;letter-spacing:0.408px;padding-left:1.8px">Duration: 00:51:02, Upload Date: Fri Feb 21 2025</div>
<div class="a ln" style="top:249.4px;letter-spacing:0.404px;padding-left:1.8px">Why Cam Ward is a better prospect than Shedeur Sanders | The Domonique Foxworth Show</div>
  <div class="a thumb" style="top:69px" id="t1">
<i style="left:0;top:0;width:33px;height:41px;background:linear-gradient(180deg,#2e3a38,#28343e 60%,#303c46)"></i>
<i style="left:1px;top:9px;width:4px;height:16px;background:#7e8c34;filter:blur(0.8px)"></i>
<i style="left:5px;top:0;width:8px;height:10px;background:#4a5a48;filter:blur(1px)"></i>
<i style="left:12.5px;top:3px;width:14.5px;height:20px;border-radius:48% 48% 45% 45%;background:radial-gradient(ellipse at 50% 35%,#dcb4a4,#b88474)"></i>
<i style="left:12px;top:3px;width:15px;height:5px;border-radius:50% 50% 0 0;background:#5a4a44;opacity:.6"></i>
<i style="left:15.5px;top:11px;width:3px;height:1px;background:#6a4a40"></i><i style="left:21px;top:11px;width:3px;height:1px;background:#6a4a40"></i>
<i style="left:0;top:22px;width:33px;height:19px;border-radius:7px 7px 0 0;background:linear-gradient(90deg,#d0d4dc,#eceef4 40%,#dde0e8)"></i>
<i style="left:16px;top:21px;width:8px;height:6px;background:#e8d8d0;border-radius:0 0 40% 40%"></i>
<i style="left:18.5px;top:25px;width:4px;height:16px;background:repeating-linear-gradient(150deg,#8a3040 0 1.5px,#e0d8dc 1.5px 2.5px)"></i>
<i style="left:33px;top:0;width:5px;height:41px;background:linear-gradient(90deg,#c4c8cc 0 1.2px,#101010 1.2px 3.8px,#c4c8cc 3.8px)"></i>
<i style="left:38px;top:0;width:34px;height:41px;background:linear-gradient(180deg,#6a5a52,#4a3c38 55%,#2e2424)"></i>
<i style="left:58px;top:1px;width:10px;height:7px;border-radius:50%;background:#3a5a50;filter:blur(0.8px)"></i>
<i style="left:60px;top:8px;width:12px;height:16px;background:#7a6a62;filter:blur(1.5px)"></i>
<i style="left:44px;top:4px;width:14px;height:21px;border-radius:48% 48% 42% 42%;background:radial-gradient(ellipse at 45% 35%,#c48c76,#9a6450)"></i>
<i style="left:38px;top:23px;width:34px;height:18px;border-radius:9px 9px 0 0;background:linear-gradient(90deg,#302424,#3a2c2a 50%,#262020)"></i>
<i style="left:48px;top:25px;width:8px;height:7px;background:#5a1e1e;border-radius:0 0 30% 30%"></i>
<i style="left:47px;top:31px;width:10px;height:10px;border-radius:40% 40% 20% 20%;background:#b48472"></i>
<i style="left:68px;top:20px;width:4px;height:21px;background:#2a4030;opacity:.7"></i>
<i style="left:72px;top:0;width:19px;height:11px;background:linear-gradient(90deg,#7a6aa8,#d8d0ea 50%,#8a78b8)"></i>
<i style="left:78px;top:1px;width:7px;height:9px;border-radius:45%;background:#b89484"></i>
<i style="left:72px;top:11px;width:19px;height:3px;background:#2a5a30"></i>
<i style="left:72px;top:14px;width:19px;height:3px;background:#e4e4e8"></i>
<i style="left:73px;top:14.8px;width:11px;height:1.6px;background:repeating-linear-gradient(90deg,#222 0 1.5px,transparent 1.5px 2.5px)"></i>
<i style="left:72px;top:17px;width:19px;height:2.6px;background:#b81e1e"></i>
<i style="left:72px;top:19.6px;width:19px;height:3.4px;background:#e6c440"></i>
<i style="left:72px;top:23px;width:19px;height:18px;background:#c42222"></i>
<i style="left:73px;top:25px;width:15px;height:15px;background:repeating-linear-gradient(180deg,#fbe0e0 0 1.2px,transparent 1.2px 3px);opacity:.8"></i>
<i style="left:0;top:40.7px;width:72px;height:6px;background:linear-gradient(90deg,#e85810,#f07a20)"></i>
<i style="left:3px;top:42.3px;width:62px;height:2.8px;background:repeating-linear-gradient(90deg,#fbe6c0 0 2px,transparent 2px 2.8px);opacity:.7"></i>
<i style="left:72px;top:40.7px;width:19px;height:6px;background:#141416"></i>
<i style="left:77px;top:41.8px;width:10px;height:3.6px;background:repeating-linear-gradient(90deg,#ddd 0 2px,transparent 2px 2.6px)"></i>
<i style="left:0;top:46.7px;width:91px;height:5px;background:linear-gradient(90deg,#6a1410,#5a100e)"></i>
</div>
  <div class="a thumb" style="top:120.4px" id="t2">
<i style="left:0;top:0;width:91px;height:51.4px;background:linear-gradient(90deg,#3a3030 0,#2e2828 30%,#1c1a1a 55%,#141414 100%)"></i>
<i style="left:0;top:0;width:60px;height:6px;background:linear-gradient(180deg,#4a2420,rgba(60,40,30,0))"></i>
<i style="left:0;top:0;width:91px;height:1.6px;background:#6e1c16"></i>
<i style="left:4px;top:2px;width:14px;height:40px;background:#4a4040;filter:blur(2px)"></i>
<i style="left:52px;top:32px;width:12px;height:20px;border-radius:40%;background:#3a2a20;filter:blur(1.5px)"></i>
<i style="left:1px;top:1.5px;width:47px;height:47px;border-radius:50%;border:2.6px solid #92b4c6"></i>
<i style="left:11px;top:5px;width:24px;height:8px;border-radius:50% 50% 20% 20%;background:#3a2a20"></i>
<i style="left:12px;top:7.5px;width:22px;height:27px;border-radius:46% 46% 42% 42%;background:radial-gradient(ellipse at 45% 40%,#c4927e,#94624a 75%)"></i>
<i style="left:16px;top:16.5px;width:4px;height:1.3px;background:#5a3628"></i><i style="left:24px;top:16.5px;width:4px;height:1.3px;background:#5a3628"></i>
<i style="left:15.5px;top:27px;width:17px;height:8.5px;border-radius:20% 20% 50% 50%;background:#2a1e18"></i>
<i style="left:19px;top:27.5px;width:8px;height:2px;background:#8a5a44"></i>
<i style="left:9px;top:36px;width:33px;height:16px;border-radius:12px 12px 0 0;background:linear-gradient(90deg,#d8c040,#ecd450 50%,#d4b83c)"></i>
<i style="left:16px;top:35px;width:20px;height:13px;border-radius:0 0 45% 45%;background:linear-gradient(#9a6040,#b07050)"></i>
<i style="left:10px;top:45px;width:32px;height:2px;background:#6a78b8;opacity:.8"></i>
<i style="left:0;top:44px;width:13px;height:8px;border-radius:50% 50% 0 0;background:#b87a64"></i>
<i style="left:36.5px;top:29.5px;width:18px;height:18px;border-radius:50%;background:radial-gradient(circle,#9cc0dc,#7aa4c4);border:1px solid #c0d8ea"></i>
<i style="left:40px;top:34px;width:10px;height:8px;background:repeating-linear-gradient(180deg,#e8f2fa 0 1.5px,transparent 1.5px 3.5px);opacity:.8"></i>
<i style="left:77px;top:4px;width:12px;height:3px;background:#e8e8e8"></i>
<b style="left:53.7px;top:7.6px;font-size:7px;transform:scale(1.0,1.0);color:#fff;-webkit-text-stroke:0.35px #fff">REACTION</b>
<b style="left:40.7px;top:14.1px;font-size:7px;transform:scale(1.047,1.0);color:#fff;-webkit-text-stroke:0.35px #fff">TO LEBRON'S</b>
<b style="left:32.6px;top:19.9px;font-size:7px;transform:scale(1.062,1.0);color:#fff;-webkit-text-stroke:0.35px #fff">40-POINT GAME</b>
<i style="left:46px;top:28px;width:44px;height:2.4px;background:repeating-linear-gradient(90deg,#d0d0d0 0 2.2px,transparent 2.2px 3px);opacity:.75"></i>
</div>
  <div class="a thumb" style="top:171.8px" id="t3">
<i style="left:0;top:0;width:91px;height:51.4px;background:linear-gradient(90deg,#161616,#1c1c1c 45%,#2e2626 62%,#44383a 85%,#3a3434)"></i>
<i style="left:0;top:0;width:50px;height:51.4px;background:repeating-linear-gradient(135deg,rgba(255,255,255,.03) 0 1px,transparent 1px 3px)"></i>
<i style="left:0;top:0;width:91px;height:1px;background:#8a7a50"></i>
<i style="left:76px;top:22px;width:16px;height:30px;border-radius:40%;background:#7a5646;filter:blur(1.2px)"></i>
<i style="left:78px;top:2px;width:13px;height:20px;background:#5a4a48;filter:blur(1.5px)"></i>
<i style="left:52px;top:1px;width:27px;height:14px;border-radius:50% 50% 30% 30%;background:#151212"></i>
<i style="left:56px;top:11px;width:20px;height:28px;border-radius:40% 40% 45% 45%;background:radial-gradient(ellipse at 50% 40%,#9a6a54,#74503e 75%)"></i>
<i style="left:59px;top:20px;width:4px;height:1.5px;background:#3a2420"></i><i style="left:68px;top:20px;width:4px;height:1.5px;background:#3a2420"></i>
<i style="left:61px;top:28px;width:9px;height:2px;background:#6a3a30"></i>
<i style="left:58px;top:32px;width:16px;height:6px;border-radius:0 0 50% 50%;background:#3a2820"></i>
<i style="left:50px;top:38px;width:32px;height:14px;border-radius:8px 8px 0 0;background:#2a2a2c"></i>
<i style="left:57px;top:36px;width:19px;height:8px;border-radius:0 0 50% 50%;border:1.5px solid #c8d8d8;border-top:none;background:#7a5444"></i>
<i style="left:55px;top:47px;width:22px;height:3px;background:repeating-linear-gradient(90deg,#ddd 0 2px,transparent 2px 3px);opacity:.8"></i>
<i style="left:33px;top:28px;width:15px;height:9px;border-radius:50% 50% 20% 20%;background:#121010"></i>
<i style="left:36px;top:33px;width:11px;height:13px;border-radius:45%;background:radial-gradient(ellipse at 50% 45%,#8a6450,#5a4032)"></i>
<i style="left:31px;top:44px;width:21px;height:8px;border-radius:7px 7px 0 0;background:#9a6a50"></i>
<b style="left:1.8px;top:8.9px;font-size:7.5px;transform:scale(1.066,1.0);color:#fff;-webkit-text-stroke:0.35px #fff">THE FUTURE</b>
<b style="left:1.8px;top:16.0px;font-size:7.5px;transform:scale(1.131,1.0);color:#fff;-webkit-text-stroke:0.35px #fff">OF GIANNIS</b>
<b style="left:1.8px;top:22.0px;font-size:7.5px;transform:scale(1.128,1.0);color:#fff;-webkit-text-stroke:0.35px #fff">&amp; EMBIID</b>
<i style="left:2.5px;top:32px;width:29px;height:2px;background:repeating-linear-gradient(90deg,#c8c8c8 0 2px,transparent 2px 2.6px);opacity:.75"></i>
<i style="left:2px;top:45.8px;width:12px;height:3.2px;background:#e8e8e8;opacity:.9"></i>
</div>
  <div class="a thumb" style="top:223.2px" id="t4">
<i style="left:0;top:0;width:91px;height:51.4px;background:linear-gradient(90deg,#141414,#181818 40%,#262222 55%,#2a2a2c)"></i>
<i style="left:0;top:0;width:50px;height:51.4px;background:repeating-linear-gradient(135deg,rgba(255,255,255,.03) 0 1px,transparent 1px 3px)"></i>
<i style="left:18px;top:-6px;width:36px;height:16px;border-radius:50%;background:#3e3632;filter:blur(3px)"></i>
<i style="left:44px;top:-4px;width:50px;height:30px;border-radius:40%;background:#8e8278;filter:blur(4px)"></i>
<i style="left:78px;top:14px;width:16px;height:36px;background:#7a8088;filter:blur(3px)"></i>
<i style="left:42px;top:5px;width:47px;height:47px;border-radius:50%;border:3.2px solid #1f4a50"></i>
<i style="left:43.5px;top:6.5px;width:44px;height:44px;border-radius:50%;border:1px dotted #d0e0e0;opacity:.7"></i>
<i style="left:54px;top:6px;width:25px;height:12px;border-radius:50% 50% 30% 30%;background:#141010"></i>
<i style="left:56px;top:13px;width:21px;height:27px;border-radius:40% 40% 45% 45%;background:radial-gradient(ellipse at 50% 40%,#ac7458,#7e5240 75%)"></i>
<i style="left:58px;top:21px;width:5px;height:1.5px;background:#2a1a14"></i><i style="left:69px;top:21px;width:5px;height:1.5px;background:#2a1a14"></i>
<i style="left:58px;top:30px;width:17px;height:9px;border-radius:10% 10% 50% 50%;background:#3a2620"></i>
<i style="left:61px;top:37px;width:11px;height:8px;background:#a0604a"></i>
<i style="left:49px;top:41px;width:40px;height:11px;border-radius:9px 9px 0 0;background:#38383a"></i>
<i style="left:53px;top:43px;width:30px;height:6px;border-radius:0 0 50% 50%;border-bottom:1.2px dotted #e0e0e0"></i>
<i style="left:37px;top:35.5px;width:16px;height:7px;border-radius:3px;background:#2a8a90;border:1px solid #5ab8b0"></i>
<i style="left:39px;top:37.5px;width:12px;height:2.5px;background:repeating-linear-gradient(90deg,#bfeee8 0 2px,transparent 2px 3px);opacity:.7"></i>
<b style="left:1.8px;top:11.2px;font-size:6.3px;transform:scale(1.18,0.95);color:#fff;-webkit-text-stroke:0.15px #fff">WARD OVER</b>
<b style="left:1.8px;top:16.5px;font-size:6.3px;transform:scale(1.168,0.95);color:#fff;-webkit-text-stroke:0.15px #fff">SANDERS?!</b>
<i style="left:10px;top:31px;width:16px;height:2px;background:repeating-linear-gradient(90deg,#e0e0e0 0 2.2px,transparent 2.2px 3px);opacity:.85"></i>
<i style="left:2px;top:45px;width:12px;height:3.2px;background:#e8e8e8;opacity:.9"></i>
</div>

  <div class="a inp" style="top:285.5px"></div>
  <div class="a inp" style="top:313.5px;height:22px;border-color:#62b2d6"></div>
  <div class="a inp" style="top:342.5px;background:#f8f8f8"></div>
  <svg class="a" style="left:448.2px;top:351.2px" width="9" height="6" viewBox="0 0 9 6"><path d="M1 1 L4.5 4.5 L8 1" stroke="#31363b" stroke-width="1" fill="none"/></svg>
  <div class="a btn" style="left:467.5px;top:285.5px;width:20px;height:21px"><svg class="a" style="left:4px;top:3.5px" width="12" height="13" viewBox="0 0 12 13" fill="none" stroke="#232629" stroke-width="0.9">
<path d="M3.2 2.2 H1.5 V12.2 H10.5 V2.2 H8.8"/><rect x="3.4" y="0.9" width="5.2" height="2.4" rx="0.6" fill="#232629" stroke="none"/><path d="M3 5.2h1.2M5.3 5.2h3.7M3 7.4h1.2M5.3 7.4h3.7M3 9.6h1.2M5.3 9.6h3.7"/></svg></div>
  <div class="a" style="left:496px;top:290.5px;width:11.5px;height:10.5px;border:1px solid #cfd0d1;border-radius:2.5px;background:#fbfbfb"></div>
  <div class="a btn" style="left:467.5px;top:314.5px;width:20px;height:20px"><svg class="a" style="left:2.5px;top:3.2px" width="13" height="12" viewBox="0 0 13 12" fill="none" stroke="#232629" stroke-width="1.1">
<path d="M3.2 3.2 A4.6 4.6 0 1 1 2.6 8"/><path d="M0.8 4.6 L3 6.6 L4.9 4.3" stroke-width="1"/><path d="M7.5 3 V6.6 H9.8" stroke-width="1.2"/></svg></div>
  <div class="a btn" style="left:495.5px;top:314.5px;width:20px;height:20px"><svg class="a" style="left:3.2px;top:4.2px" width="13" height="10" viewBox="0 0 13 10" fill="none" stroke="#232629" stroke-width="1">
<path d="M3.8 8 H2.8 A2.3 2.3 0 0 1 2.6 3.5 A3.3 3.3 0 0 1 8.8 3 A2.5 2.5 0 0 1 10.6 8 H9.2"/><path d="M6.5 4 V9.2 M4.8 7.6 L6.5 9.3 L8.2 7.6"/></svg></div>
  <div class="a btn" style="left:46px;top:371.5px;width:85px;background:#ededee;color:#a8aaac;border-color:#e2e3e4"></div>
  <div class="a btn" style="left:132px;top:371.5px;width:84px"></div>
  <div class="a btn" style="left:217.5px;top:371.5px;width:156px"></div>
  <div class="a btn" style="left:374.5px;top:371.5px;width:84px;text-align:left;padding-left:17px"></div>
  <svg class="a" style="left:448.2px;top:380.2px" width="9" height="6" viewBox="0 0 9 6"><path d="M1 1 L4.5 4.5 L8 1" stroke="#31363b" stroke-width="1" fill="none"/></svg>
  <div class="a btn" style="left:460.5px;top:371.5px;width:84px"></div>
<div class="a ui" style="left:250.80px;top:6.45px;letter-spacing:0.438px;color:#232629">Media Downloader</div>
<div class="a ui" style="left:14.50px;top:34.25px;letter-spacing:0.375px;color:#232629">Basic Downloader</div>
<div class="a ui" style="left:109.50px;top:34.25px;letter-spacing:0.406px;color:#232629">Batch Downloader</div>
<div class="a ui" style="left:207.60px;top:34.25px;letter-spacing:0.440px;color:#232629">Playlist Downloader</div>
<div class="a ui" style="left:317.20px;top:34.25px;letter-spacing:0.583px;color:#232629">Library</div>
<div class="a ui" style="left:368.50px;top:34.25px;letter-spacing:0.525px;color:#232629">Configure</div>
<div class="a ui" style="left:434.70px;top:34.25px;letter-spacing:0.500px;color:#232629">About</div>
<div class="a ui" style="left:54.10px;top:55.85px;letter-spacing:0.478px;color:#232629">Thumbnail</div>
<div class="a ui" style="left:303.80px;top:55.65px;letter-spacing:0.627px;font-weight:bold;color:#232629">Url To Download</div>
<div class="a ui" style="left:74.40px;top:291.75px;letter-spacing:0.360px;color:#232629">Enter URL:</div>
<div class="a ui" style="left:36.00px;top:320.25px;letter-spacing:0.471px;color:#232629">Download Options:</div>
<div class="a ui" style="left:58.50px;top:348.75px;letter-spacing:0.542px;color:#232629">Engine Name:</div>
<div class="a ui" style="left:136.60px;top:348.75px;letter-spacing:0.560px;color:#232629">yt-dlp</div>
<div class="a ui" style="left:73.00px;top:377.85px;letter-spacing:0.320px;color:#a9abad">Cancel</div>
<div class="a ui" style="left:150.60px;top:377.85px;letter-spacing:0.614px;color:#232629">Download</div>
<div class="a ui" style="left:262.70px;top:377.85px;letter-spacing:0.207px;color:#232629">Add Url To List</div>
<div class="a ui" style="left:393.00px;top:377.85px;letter-spacing:0.333px;color:#232629">Options</div>
<div class="a ui" style="left:492.80px;top:377.85px;letter-spacing:0.475px;color:#232629">Quit</div>
</div>
</body></html>
